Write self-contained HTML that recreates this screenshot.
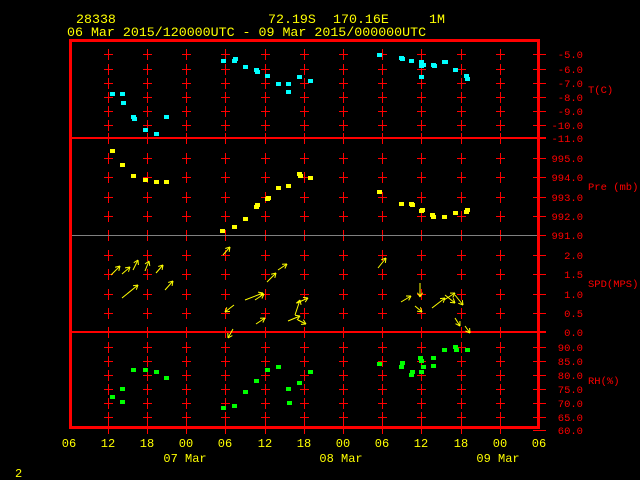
<!DOCTYPE html>
<html><head><meta charset="utf-8"><style>
html,body{margin:0;padding:0;background:#000;width:640px;height:480px;overflow:hidden}
svg{display:block}
text{font-family:"Liberation Mono",monospace}
</style></head><body>
<svg id="s" width="640" height="480" viewBox="0 0 640 480" xmlns="http://www.w3.org/2000/svg">
<rect width="640" height="480" fill="#000"/>
<g fill="#ffff00" font-size="13.3">
<text x="76" y="23">28338</text>
<text x="268" y="23">72.19S</text>
<text x="333" y="23">170.16E</text>
<text x="429" y="23">1M</text>
<text x="67" y="36">06 Mar 2015/120000UTC - 09 Mar 2015/000000UTC</text>
</g>
<g id="grid" stroke="#ff0000" stroke-width="1" shape-rendering="crispEdges"></g>
<line x1="70" y1="235.5" x2="540" y2="235.5" stroke="#808080" stroke-width="1" shape-rendering="crispEdges"/>
<g stroke="#ff0000" stroke-width="2" shape-rendering="crispEdges">
<line x1="70" y1="138" x2="546" y2="138"/>
<line x1="70" y1="332" x2="546" y2="332"/>
</g>
<rect x="70.5" y="40.5" width="468" height="387" fill="none" stroke="#ff0000" stroke-width="3" shape-rendering="crispEdges"/>
<g id="lab" fill="#ff0000" font-size="10.5" text-anchor="end"></g>
<g fill="#ff0000" font-size="10.5">
<text x="588" y="93">T(C)</text>
<text x="588" y="190">Pre (mb)</text>
<text x="588" y="287">SPD(MPS)</text>
<text x="588" y="384">RH(%)</text>
</g>
<g fill="#ffff00" font-size="12" text-anchor="middle">
<text x="69" y="447">06</text><text x="108" y="447">12</text><text x="147" y="447">18</text>
<text x="186" y="447">00</text><text x="225" y="447">06</text><text x="265" y="447">12</text>
<text x="304" y="447">18</text><text x="343" y="447">00</text><text x="382" y="447">06</text>
<text x="421" y="447">12</text><text x="461" y="447">18</text><text x="500" y="447">00</text>
<text x="539" y="447">06</text>
<text x="185" y="462">07 Mar</text><text x="341" y="462">08 Mar</text><text x="498" y="462">09 Mar</text>
</g>
<text x="15" y="477" fill="#ffff00" font-size="12">2</text>
<g id="pts"></g>
<g id="wind" stroke="#ffff00" stroke-width="1" fill="none"></g>
</svg>
<script>
var NS="http://www.w3.org/2000/svg";
function el(p,t,a){var e=document.createElementNS(NS,t);for(var k in a)e.setAttribute(k,a[k]);document.getElementById(p).appendChild(e);return e;}
var xs=[108,147,186,225,265,304,343,382,421,461,500,539];
var ticks=[54,69,83,97,111,125,138,158,177,197,216,235,255,274,294,313,332,347,361,375,389,403,417,428];
var seps={138:1,235:1,332:1,428:1};
xs.forEach(function(x){ticks.forEach(function(y){
 if(x<539){el("grid","line",{x1:x+0.5,y1:y-5,x2:x+0.5,y2:y+6});}
 if(!seps[y]) el("grid","line",{x1:x-4,y1:y+0.5,x2:x+5,y2:y+0.5});
});});
var labs=[[54,"-5.0"],[69,"-6.0"],[83,"-7.0"],[97,"-8.0"],[111,"-9.0"],[125,"-10.0"],[138,"-11.0"],[158,"995.0"],[177,"994.0"],[197,"993.0"],[216,"992.0"],[235,"991.0"],[255,"2.0"],[274,"1.5"],[294,"1.0"],[313,"0.5"],[332,"0.0"],[347,"90.0"],[361,"85.0"],[375,"80.0"],[389,"75.0"],[403,"70.0"],[417,"65.0"],[430,"60.0"]];
labs.forEach(function(l){var t=el("lab","text",{x:583,y:l[0]+4});t.textContent=l[1];el("grid","line",{x1:533,y1:l[0]+0.5,x2:546,y2:l[0]+0.5});});
var T=[[112,94],[122,94],[123,103],[133,117],[134,119],[145,130],[156,134],[166,117],[223,61],[234,61],[235,59],[245,67],[256,70],[257,72],[267,76],[278,84],[288,84],[288,92],[299,77],[310,81],[379,55],[401,58],[402,59],[411,61],[421,62],[421,66],[423,65],[421,77],[433,65],[434,66],[444,62],[445,62],[455,70],[466,76],[467,79]];
var P=[[112,151],[122,165],[133,176],[145,180],[156,182],[166,182],[222,231],[234,227],[245,219],[256,207],[257,205],[267,199],[268,198],[278,188],[288,186],[299,174],[300,176],[310,178],[379,192],[401,204],[411,204],[412,205],[421,211],[422,210],[432,215],[433,217],[444,217],[455,213],[466,212],[467,210]];
var R=[[112,397],[122,402],[122,389],[133,370],[145,370],[156,372],[166,378],[223,408],[234,406],[245,392],[256,381],[267,370],[278,367],[288,389],[289,403],[299,383],[310,372],[379,364],[401,367],[402,363],[411,375],[412,372],[420,358],[421,361],[423,367],[421,372],[433,366],[433,358],[444,350],[455,347],[456,350],[467,350]];
function pts(a,c){a.forEach(function(p){el("pts","rect",{x:p[0]-2,y:p[1]-2,width:5,height:4,fill:c});});}
pts(T,"#00ffff");pts(P,"#ffff00");pts(R,"#00ff00");
var W=[[111,275,120,266],[122,274,130,267],[133,270,138,260],[145,271,149,261],[156,273,163,265],[122,298,138,285],[165,290,173,281],[223,255,230,247],[234,305,225,312],[233,329,228,338],[245,300,263,293],[255,300,264,294],[267,282,276,273],[278,270,287,264],[256,324,265,318],[288,321,300,316],[297,303,308,298],[295,315,300,300],[298,320,306,324],[378,268,386,258],[401,302,411,296],[420,283,420,297],[415,306,422,312],[432,308,445,298],[444,300,455,293],[445,295,455,303],[455,295,463,305],[455,318,460,326],[465,326,470,333]];
W.forEach(function(w){var x1=w[0],y1=w[1],x2=w[2],y2=w[3];el("wind","line",{x1:x1,y1:y1,x2:x2,y2:y2});
var a=Math.atan2(y2-y1,x2-x1);[2.6,-2.6].forEach(function(d){el("wind","line",{x1:x2,y1:y2,x2:x2+5*Math.cos(a+d),y2:y2+5*Math.sin(a+d)});});});
</script>
</body></html>
